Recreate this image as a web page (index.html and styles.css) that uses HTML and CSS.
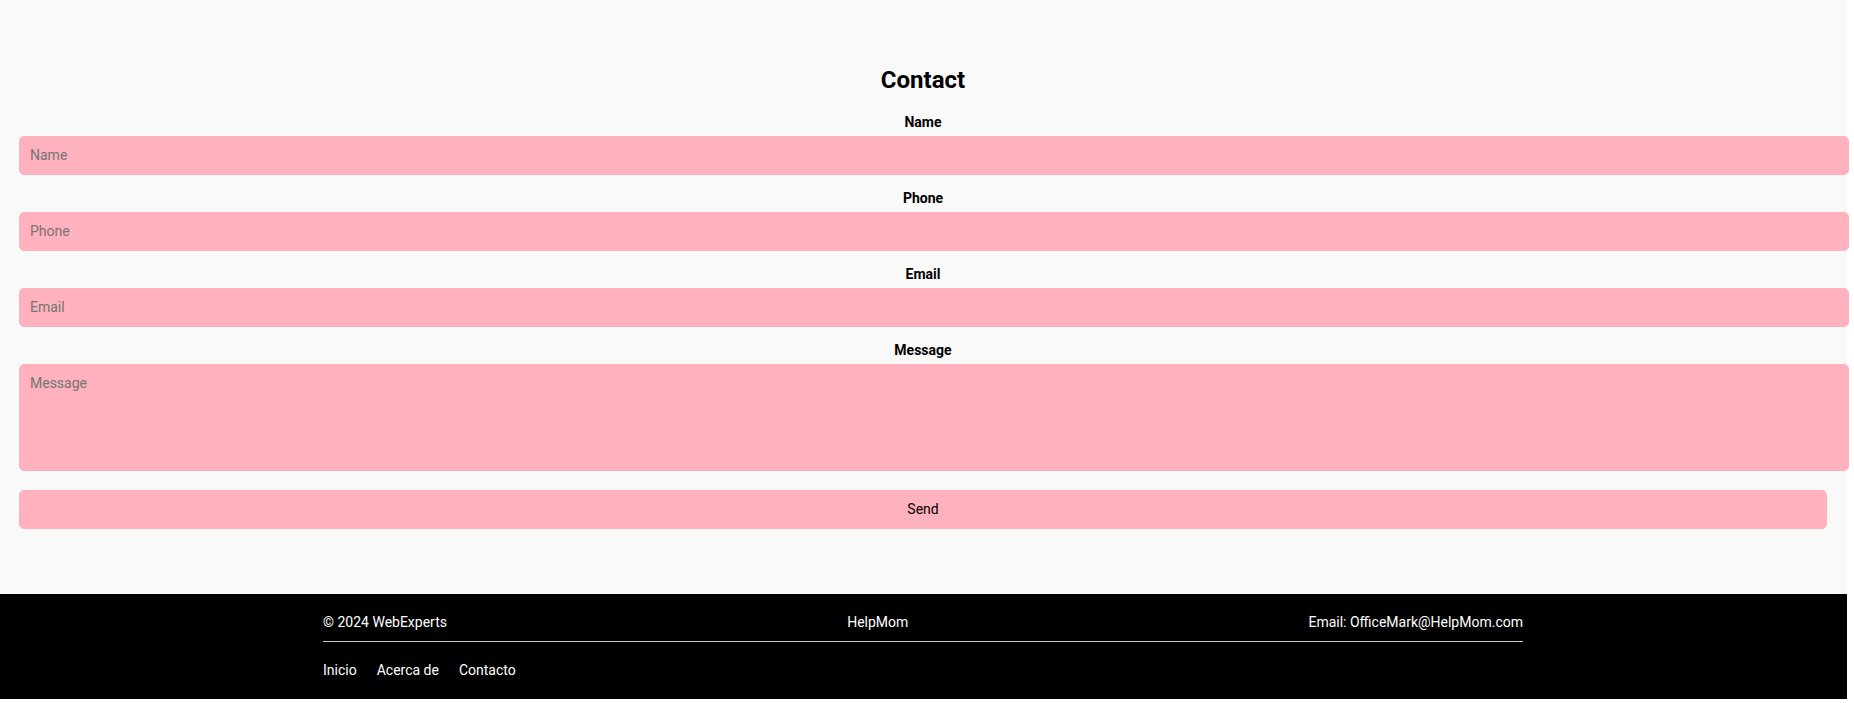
FILE: index.html
```html
<!DOCTYPE html>
<html lang="en">
<head>
<meta charset="utf-8">
<title>Contact</title>
<link rel="stylesheet" href="styles.css">
</head>
<body>
<div class="page">
  <main class="contact">
    <h2 class="contact-title">Contact</h2>
    <form class="contact-form">
      <div class="field">
        <label for="name">Name</label>
        <input type="text" id="name" placeholder="Name">
      </div>
      <div class="field">
        <label for="phone">Phone</label>
        <input type="tel" id="phone" placeholder="Phone">
      </div>
      <div class="field">
        <label for="email">Email</label>
        <input type="email" id="email" placeholder="Email">
      </div>
      <div class="field field-message">
        <label for="message">Message</label>
        <textarea id="message" rows="5" placeholder="Message"></textarea>
      </div>
      <button type="submit" class="send">Send</button>
    </form>
  </main>
  <footer class="footer">
    <div class="footer-inner">
      <div class="footer-top">
        <span>© 2024 WebExperts</span>
        <span>HelpMom</span>
        <span>Email: OfficeMark@HelpMom.com</span>
      </div>
      <nav class="footer-nav">
        <a href="#">Inicio</a>
        <a href="#">Acerca de</a>
        <a href="#">Contacto</a>
      </nav>
    </div>
  </footer>
</div>
</body>
</html>
```
FILE: styles.css
```css
body {
  margin: 0;
  background: #fff;
  color: #000;
  font: 14px/16px Roboto, sans-serif;
  overflow-x: hidden;
}

.page {
  margin-right: 7px;
}

.contact {
  padding: 66px 20px 65px 19px;
  background: #f9f9f9;
  text-align: center;
}

.contact-title {
  margin: 0 0 20px;
  font-size: 24px;
  line-height: 28px;
  font-weight: 700;
}

.field {
  margin-bottom: 15px;
}

.field-message {
  margin-bottom: 19px;
}

.field label {
  display: block;
  margin-bottom: 6px;
  font-weight: 700;
}

.field input,
.field textarea,
.send {
  display: block;
  width: 100%;
  padding: 10px 10px 11px;
  border: 1px solid #ffb1bd;
  border-radius: 5px;
  background: #ffb1bd;
  color: #000;
  font: inherit;
}

.field input,
.field textarea {
  box-sizing: content-box;
  margin: 0;
}

.field input {
  height: 16px;
}

.field textarea {
  height: 84px;
  resize: none;
  overflow: auto;
}

.field ::placeholder {
  color: #757575;
}

.send {
  box-sizing: border-box;
  cursor: pointer;
}

.footer {
  padding: 20px 20px 21px 19px;
  background: #000;
  color: #fff;
}

.footer-inner {
  max-width: 1200px;
  margin: 0 auto;
}

.footer-top {
  display: flex;
  justify-content: space-between;
  padding-bottom: 11px;
  border-bottom: 1px solid #ccc;
}

.footer-nav {
  display: flex;
  gap: 20px;
  padding-top: 20px;
}

.footer-nav a {
  color: #fff;
  text-decoration: none;
}
```
